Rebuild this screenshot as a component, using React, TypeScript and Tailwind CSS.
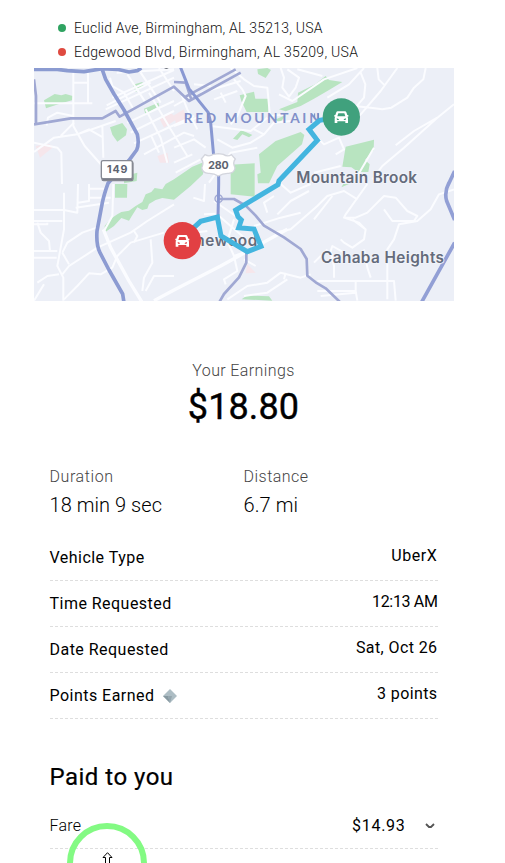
import React from "react";

const parks = [
  "M30 103 L62 84 L82 88 L95 84 L116 90 L114 103 L82 112 L36 127Z",
  "M297 56 L325 48 L330 60 L305 78Z",
  "M330 128 L373 110 L376 120 L334 144Z",
  "M228 184 L265 171 L279 190 L276 208 L250 227 L235 206Z",
  "M270 330 L310 320 L308 345 L270 352Z",
  "M395 354 L420 340 L475 302 L510 288 L507 325 L470 360 L440 385 L420 401 L385 396 L365 402 L345 414 L340 428 L325 432 L310 424 L292 452 L285 464 L262 456 L240 480 L214 498 L212 480 L230 458 L250 445 L262 438 L285 434 L305 420 L325 408 L335 385 L352 378 L362 366 L385 370Z",
  "M243 354 L280 354 L279 395 L243 395Z",
  "M670 10 L700 6 L711 12 L695 36 L672 24Z",
  "M617 88 L660 77 L664 98 L705 98 L703 138 L638 138 L622 105Z",
  "M726 160 L760 145 L735 172Z M735 130 L790 108 L792 80 L845 54 L875 30 L885 42 L925 48 L880 75 L840 98 L800 120 L755 136Z",
  "M597 218 L622 192 L655 207 L645 214 L625 205 L610 222Z",
  "M675 265 L725 225 L800 198 L811 207 L804 235 L770 265 L730 300 L705 352 L672 352 L670 325 L680 320Z",
  "M590 296 L662 292 L662 392 L590 385Z",
  "M935 242 L1020 221 L1019 253 L993 282 L1007 295 L1003 318 L972 318 L952 304 L925 302Z",
  "M623 700 L640 688 L705 691 L715 704Z",
  "M922 364 L928 354 L945 354Z",
];

const blocks = [
  "M5 240 L45 234 L58 243 L18 275Z",
  "M375 155 L410 140 L430 158 L390 185Z",
  "M370 270 L400 260 L405 290 L378 290Z",
  "M420 148 L450 130 L455 160 L428 182Z",
  "M640 595 L665 620 L635 622Z",
];

const minorRoads = [
  "M118 20 V180 L152 240 L205 300 M162 20 V110 M0 112 H175 M118 50 H160 M38 178 L42 155 L70 140 L118 150 M0 230 L70 245 L82 260 L84 354",
  "M0 258 L60 215 L130 205 L245 165 M80 210 L120 170 M205 180 L208 275 M130 205 L165 190 L208 215",
  "M228 35 L235 60 L270 80 L300 132 M280 25 L335 110 M320 20 L380 110 M375 6 L420 75 M235 95 L420 12 M218 118 L350 50 M215 130 L420 35 M248 20 L420 10 M345 80 L410 190 L460 270",
  "M280 170 L345 140 L420 105 M290 200 L420 135 M300 232 L480 150 M335 130 L380 215 L400 290 M352 210 L375 260 M330 265 L450 200 L480 210",
  "M420 180 L490 155 M420 245 L480 220 L515 245 M420 120 L465 95 M440 80 L460 130 L490 190 M420 290 L475 265 M425 320 L500 280",
  "M480 55 L530 60 M500 80 L570 60 L620 45 M540 100 L610 75 M560 80 L575 110 M600 40 L625 70 L635 90 L610 150 L590 175 M590 6 L630 40 L660 60 L700 65 L708 150 L760 145",
  "M530 180 L650 195 L700 155 M550 220 L595 245 L650 230 L690 205 L660 190 M690 205 L720 170 L770 165 M670 245 L590 260 L525 350",
  "M740 6 L750 35 L745 65 L765 92 L785 65 L795 35 L760 10 M735 85 L775 105 L870 40 L970 6",
  "M790 10 L865 30 M990 6 L945 55 L880 95 M980 20 L994 55 L990 95 L970 118 M1030 6 L1034 40 L1050 56 M1090 6 L1040 75 L980 145 L925 200 M1175 6 L1168 40 L1140 65 L1120 95 L1072 125 L1045 130 L1010 125 L960 120",
  "M845 210 L870 235 L915 215 L930 250 L905 265 M840 320 L920 300 M1020 245 L970 330 M1260 115 L1210 155 L1110 245 L1045 300 L1015 340 M1210 155 L1140 195 L1085 238",
  "M0 432 H90 M90 380 V490 L70 600 L88 635 V704 M40 470 V475 H0 M0 465 H85 M90 432 L130 440 L132 354 M132 410 L165 405 V354 M165 368 H220 M165 395 H230 M125 425 L225 410",
  "M210 495 L235 450 L238 354 M0 555 H70 M10 470 L20 500 L45 525 L48 555 M0 575 H68 M10 650 L40 630 L75 625 M0 704 L30 655",
  "M85 625 L105 600 L190 545 L290 500 L340 465 L420 415 M85 560 L100 530 L145 500 L190 484 M85 560 L105 595 M90 700 L130 660 L165 622 L200 625 L235 605 L250 570 L290 530 L390 500 M300 495 L310 510 L300 530",
  "M325 675 L330 635 L355 590 L350 520 M335 675 L360 630 L420 630",
  "M478 395 L510 405 L513 354 M510 445 L545 443 M480 500 L520 495 M540 405 L620 460",
  "M555 450 L660 540 M600 460 L580 525 L600 570 L670 545 M600 570 L610 615 L570 640 L575 655 M630 580 L665 600 M660 480 L740 455 L800 440 M700 440 L690 410 L720 390 M740 354 L770 380 L830 354 M730 445 L770 405 L825 375",
  "M720 500 L770 490 L850 420 L880 390 L930 375 L970 400 M580 700 L640 660 L700 650 L740 620 L800 635 L830 625 M630 690 L700 680 L760 640 M755 620 L750 640",
  "M840 460 L895 390 M1000 354 L935 445 L930 455 L965 455 L1000 440 L1050 390 L1085 395 L1120 435 L1150 450 L1140 465 L1075 465 L1050 430 M930 455 L975 470 L995 490 L990 520 L955 545 L930 530 L920 520 M995 490 L955 460",
  "M1260 370 L1215 385 L1190 430 L1150 465 L1095 475 L1080 520 L1060 550 V700 M930 560 L895 540 L890 555 L900 600 L900 635 M990 550 L1000 605 L1010 635 M880 550 L840 590 M850 645 H1080 L1085 704 M850 675 H965 V645 M965 675 L970 704 M860 690 L965 680",
];

const highways = [
  "M0 40 L6 90 V172 M0 175 L110 157 H205 L245 135 L257 152 L420 62 L465 105 L620 20",
  "M420 48 L455 50 L472 100 M455 92 L605 10",
  "M555 399 H600 L635 419 L665 449 L690 479 L750 514 L800 549 L818 579 L820 629 L845 649 L875 667 L917 707",
  "M637 550 V590 L615 634 L570 684 L555 710",
];

function Car({ x, y }: { x: number; y: number }) {
  return (
    <g transform={`translate(${x} ${y})`}>
      <path
        fill="white"
        fillRule="evenodd"
        d="M-11 -18 H11 Q14 -18 15 -15 L18 -7 H21 V-2 H18 Q20 0 20 3 V17 H12 V12 H-12 V17 H-20 V3 Q-20 0 -18 -2 H-21 V-7 H-18 L-15 -15 Q-14 -18 -11 -18Z M-9 -12 L-12 -3 H12 L9 -12Z M-14 3 L-13 8 H-7 L-8 5Z M14 3 L13 8 H7 L8 5Z"
      />
    </g>
  );
}

function RouteMap() {
  return (
    <svg viewBox="0 6 1260 699" preserveAspectRatio="none" className="block h-[233px] w-[420px] font-['Inter',sans-serif]">
      <rect y="6" width="1260" height="699" fill="#eceff7" />
      {blocks.map((d) => (
        <path key={d} d={d} fill="#f6e6eb" />
      ))}
      {parks.map((d) => (
        <path key={d} d={d} fill="#b8e4c0" />
      ))}
      <g fill="none" stroke="#fbfcff" strokeWidth="6" strokeLinejoin="round">
        {minorRoads.map((d) => (
          <path key={d} d={d} />
        ))}
        <path strokeWidth="10" d="M208 490 L230 545 L285 645 L325 710 M360 704 L420 672 L560 600 L760 490" />
      </g>
      <g fill="none" strokeLinejoin="round">
        <g stroke="#a0a8d3" strokeWidth="8">
          {highways.map((d) => (
            <path key={d} d={d} />
          ))}
          <circle cx="554" cy="398" r="11" strokeWidth="4" />
        </g>
        <path stroke="#8b9bd1" strokeWidth="11" d="M0 10 H70 L100 14 L150 17 L205 8 L250 10 L285 18 L310 14 L322 6" />
        <path
          stroke="#8c9bd2"
          strokeWidth="11"
          d="M203 6 L215 40 L240 84 L270 132 L310 205 Q316 235 308 252 L285 283 L222 352 Q210 385 205 410 L189 495 Q186 535 198 560 L225 612 L266 684 L270 710"
        />
        <path stroke="#8998d2" strokeWidth="9" d="M438 0 L465 68 L523 140 L530 170 L540 280 M554 325 V354 L552 460" />
        <path stroke="#929fd5" strokeWidth="11" d="M1245 350 Q1230 378 1238 405 L1262 462 M1262 530 L1162 710 M1262 315 L1242 358" />
      </g>
      <path d="M390 6 Q397 11 404 6Z" fill="#3f434d" />

      <g fontWeight="600">
        <text x="449" y="171" fontSize="41" fontWeight="700" fill="#8190c9" textLength="408" className="font-['Lato',sans-serif]">
          RED MOUNTAIN
        </text>
        <g fill="#646b7b" stroke="#f3f5fb" strokeWidth="5" paintOrder="stroke" fontSize="46">
          <text x="787" y="351" textLength="362">Mountain Brook</text>
          <text x="861" y="591" textLength="369">Cahaba Heights</text>
          <text x="484" y="539" textLength="186">newood</text>
        </g>
      </g>

      <path
        fill="none"
        stroke="#43b5df"
        strokeWidth="15"
        d="M885 158 L857 163 L825 190 L850 223 L735 344 L732 356 L605 432 L612 452 L622 462 L614 485 L660 489 L681 541 L640 557 L561 510 L550 453 L500 466 L473 491"
      />
      <path stroke="#6d88bb" strokeWidth="3" d="M842 142 V154 M853 142 V158" />

      <g stroke="#868993" strokeWidth="4">
        <rect x="204" y="287" width="93" height="57" rx="5" fill="#777a84" />
        <rect x="202" y="284" width="93" height="54" rx="5" fill="white" />
      </g>
      <path
        d="M513 266 Q526 274 538 265 L553 263 L568 265 Q581 274 592 266 L604 279 Q595 289 603 306 Q601 321 584 322 Q567 321 553 330 Q540 321 523 322 Q506 321 503 306 Q511 289 502 279Z"
        fill="white"
        stroke="#d3d5dd"
        strokeWidth="4"
      />
      <g fill="#5d6370" fontWeight="700" fontSize="32">
        <text x="219" y="321" textLength="61">149</text>
        <text x="523" y="308" textLength="61">280</text>
      </g>

      <circle cx="922" cy="153" r="56" fill="#40a17d" />
      <Car x={922} y={154} />
      <circle cx="445" cy="524" r="56" fill="#e24043" />
      <Car x={445} y={525} />
    </svg>
  );
}

function Address({ color, children, spacing }: { color: string; children: string; spacing: string }) {
  return (
    <div className="flex h-6 items-center">
      <span className={`mr-2 size-2 rounded-full ${color}`} />
      <span className={`text-sm leading-6 whitespace-nowrap ${spacing}`}>{children}</span>
    </div>
  );
}

interface DetailRowProps {
  label: string;
  value: string;
  valueSpacing?: string;
  gem?: boolean;
}

function DetailRow({ label, value, valueSpacing = "tracking-[0.4px]", gem }: DetailRowProps) {
  return (
    <div className="flex h-[46px] items-center justify-between border-b border-dashed border-[#dedede]">
      <span className="flex items-center tracking-[0.47px]">
        {label}
        {gem && (
          <svg viewBox="0 0 14 14" className="ml-[9px] size-[14px]">
            <path d="M7 0 L14 7 L7 14 L0 7Z" fill="#adbdc4" />
            <path d="M0 7 L5 7 L7 14Z" fill="#8799a1" />
            <path d="M5 7 H9 L7 14Z" fill="#94a5ad" />
          </svg>
        )}
      </span>
      <span className={`pb-1 ${valueSpacing}`}>{value}</span>
    </div>
  );
}

export default function App() {
  return (
    <main className="relative h-[863px] w-[505px] overflow-hidden bg-white font-['Roboto',sans-serif] text-base text-black">
      <section className="px-[34px] pt-4">
        <div className="pl-6 font-light text-[#111]">
          <Address color="bg-[#2fa361]" spacing="tracking-[0.22px]">Euclid Ave, Birmingham, AL 35213, USA</Address>
          <Address color="bg-[#df4a40]" spacing="tracking-[0.3px]">Edgewood Blvd, Birmingham, AL 35209, USA</Address>
        </div>
        <div className="pt-1">
          <RouteMap />
        </div>
      </section>

      <section className="ml-[49.5px] w-[388px]">
        <div className="pt-[58px] text-center">
          <div className="leading-6 font-light tracking-[0.38px] text-[#444]">Your Earnings</div>
          <div className="text-4xl leading-[48px] tracking-[0.1px] [-webkit-text-stroke:0.4px_black]">$18.80</div>
        </div>
        <div className="grid grid-cols-2 pt-[34px] font-light">
          <div>
            <div className="leading-6 tracking-[0.58px] text-[#444]">Duration</div>
            <div className="text-xl leading-8 tracking-[0.05px]">18 min 9 sec</div>
          </div>
          <div>
            <div className="leading-6 tracking-[0.48px] text-[#444]">Distance</div>
            <div className="text-xl leading-8 tracking-[0.1px]">6.7 mi</div>
          </div>
        </div>
        <div className="pt-[14px]">
          <DetailRow label="Vehicle Type" value="UberX" valueSpacing="tracking-[0.6px]" />
          <DetailRow label="Time Requested" value="12:13 AM" valueSpacing="tracking-[-0.35px]" />
          <DetailRow label="Date Requested" value="Sat, Oct 26" />
          <DetailRow label="Points Earned" value="3 points" gem />
        </div>
        <h2 className="pt-[42px] text-2xl leading-8 tracking-[0.48px] [-webkit-text-stroke:0.2px_black]">Paid to you</h2>
        <div className="mt-[10px] flex h-[46px] items-center border-b border-dashed border-[#dedede]">
          <span className="font-light tracking-[0.2px]">Fare</span>
          <span className="-mr-px ml-auto tracking-[0.7px]">$14.93</span>
          <svg viewBox="0 0 10 6" className="mr-[3px] ml-5 h-[6px] w-[10px]">
            <path d="M1 1 L4 4 H6 L9 1" fill="none" stroke="#555" strokeWidth="1.8" />
          </svg>
        </div>
      </section>

      <div className="absolute top-[823px] left-[67px] size-20 rounded-full border-[6px] border-[#83fa83]" />
      <svg viewBox="0 0 11 14" className="absolute top-[852px] left-[102px] h-[14px] w-[11px]">
        <path d="M5.5 .7 L10 5.5 H7.5 V14 H3.5 V5.5 H1Z" fill="white" stroke="black" strokeWidth="1" />
      </svg>
    </main>
  );
}
